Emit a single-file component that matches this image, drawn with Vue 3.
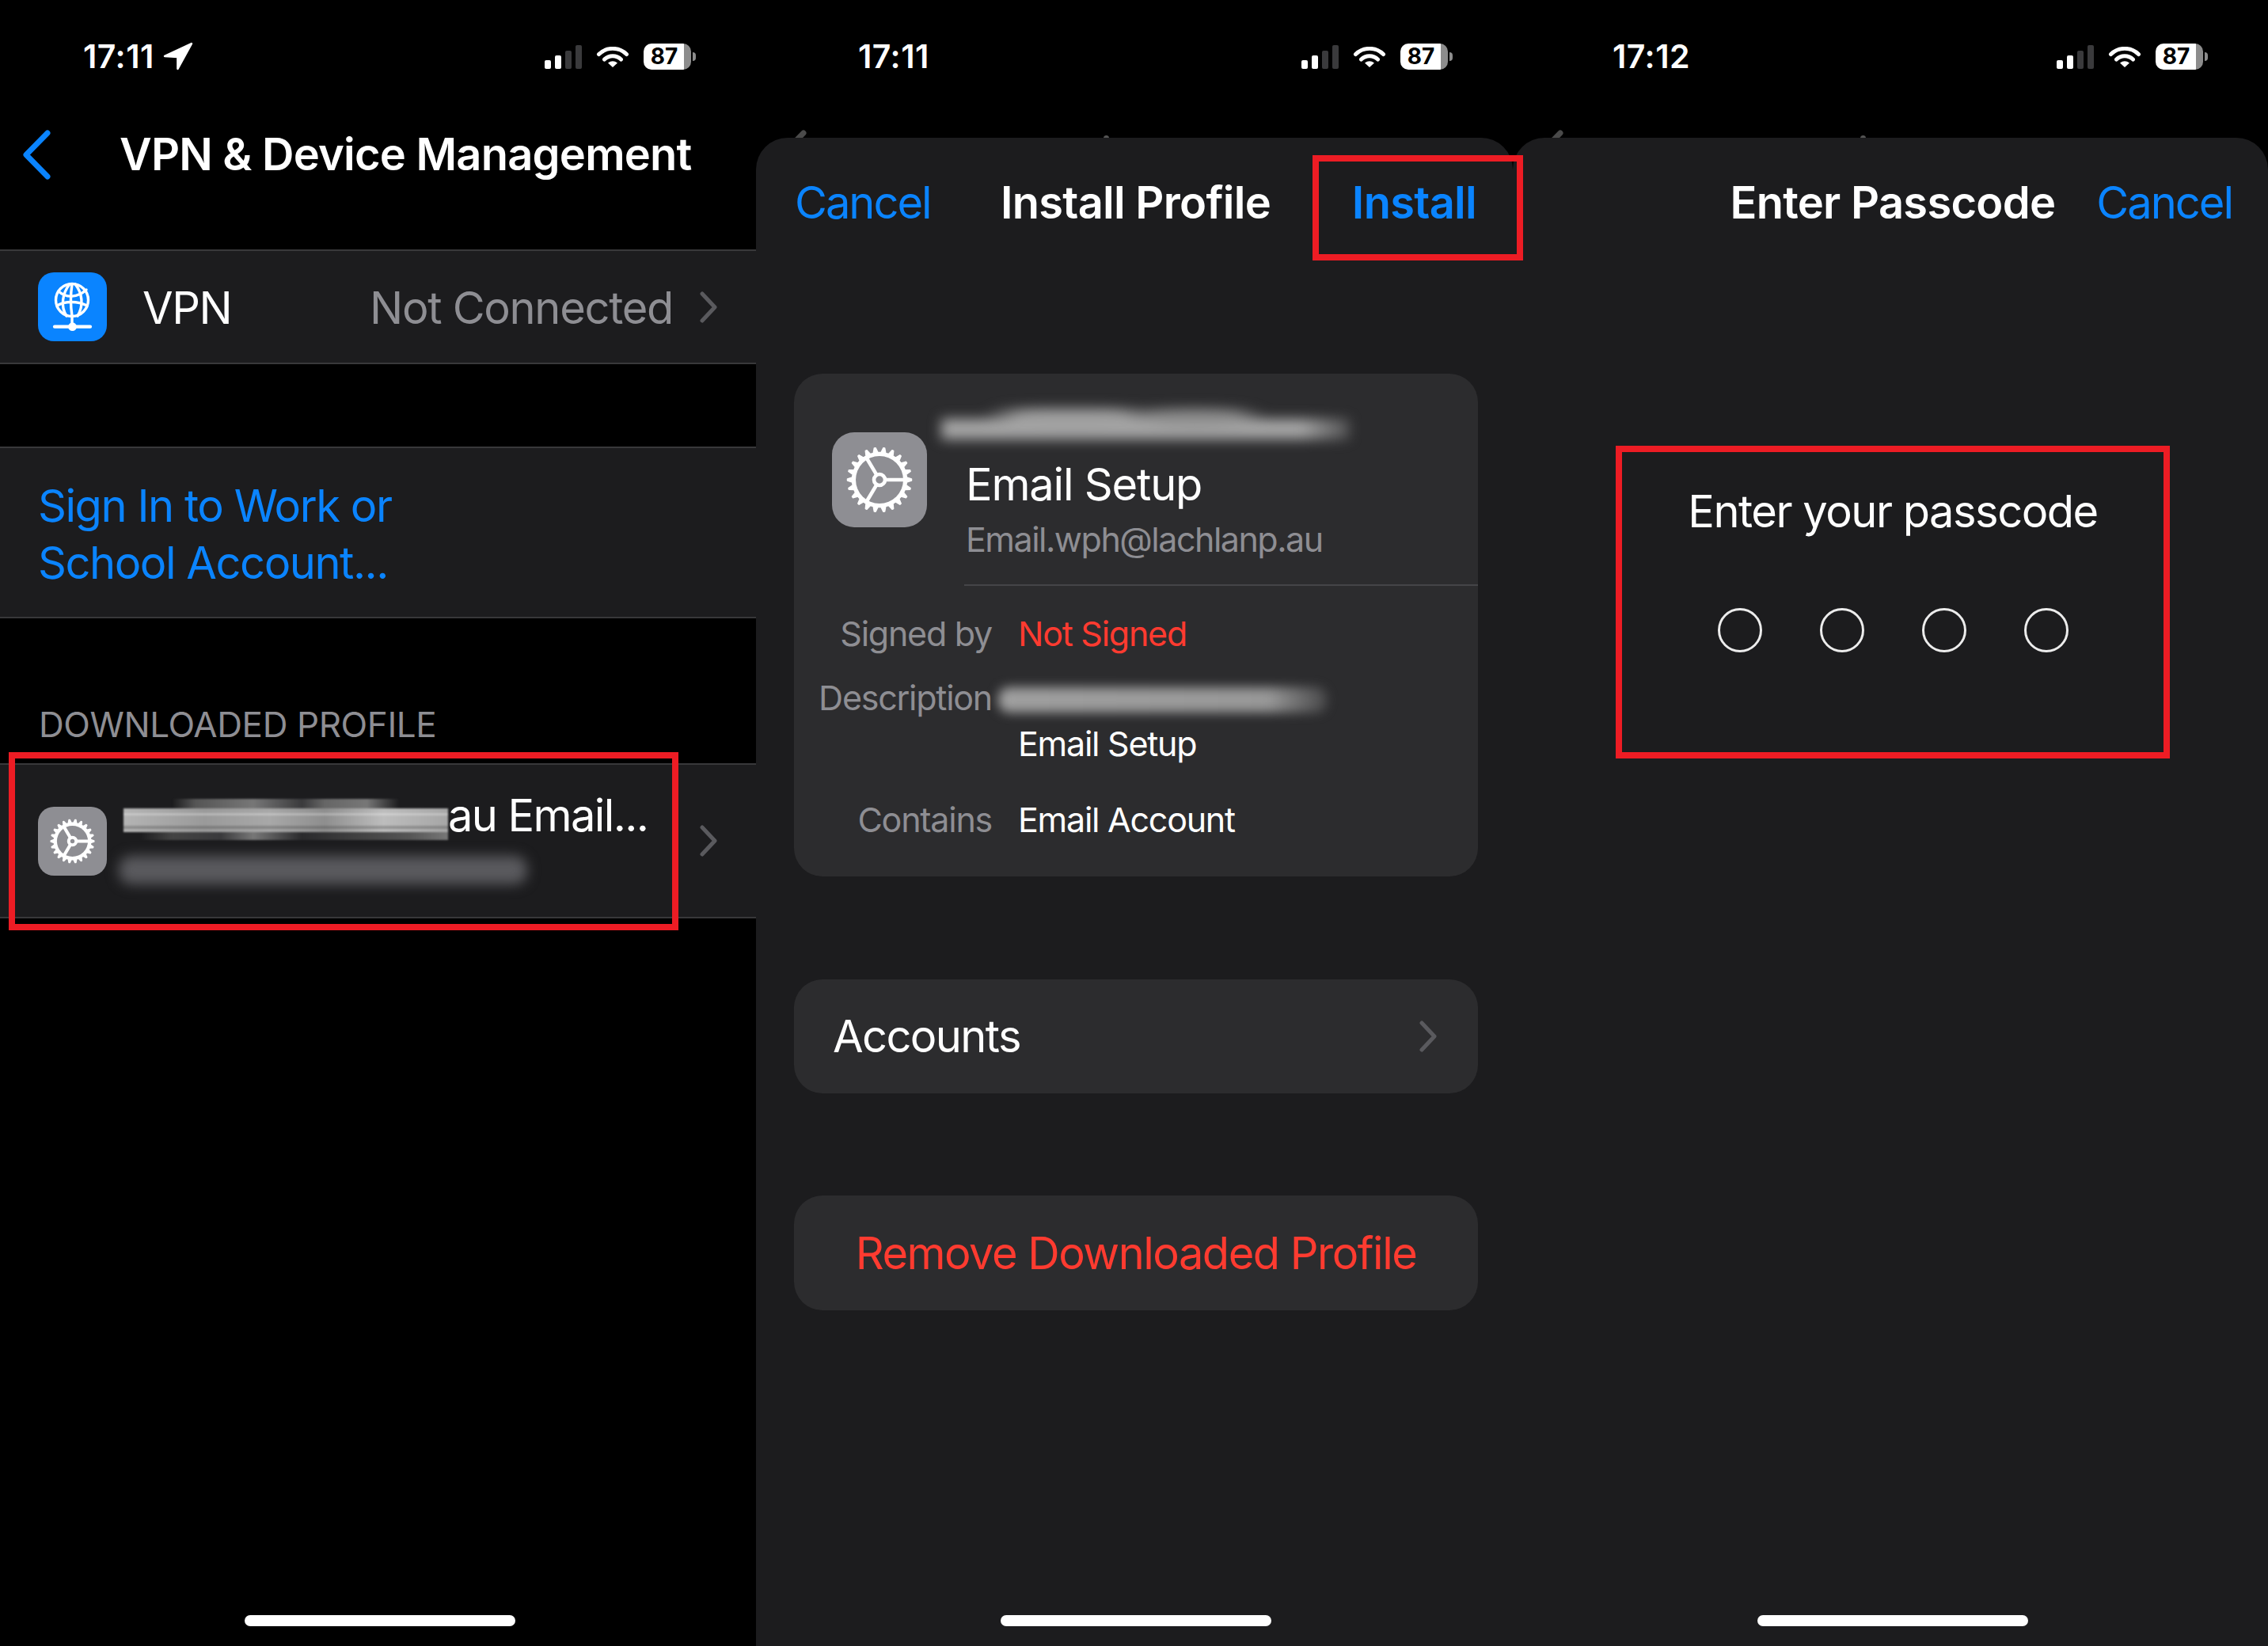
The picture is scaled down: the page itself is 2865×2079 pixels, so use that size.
<script setup>
const bars = [
  { h: 11, on: true },
  { h: 17, on: true },
  { h: 23, on: false },
  { h: 30, on: false },
]

function gear() {
  const teeth = 22
  const cx = 60
  const cy = 60
  const root = 34.5
  const tip = 40.5
  const pts = []
  for (let i = 0; i < teeth; i++) {
    const a = (i / teeth) * Math.PI * 2
    const s = (Math.PI * 2) / teeth
    const list = [
      [root, a - s * 0.3],
      [tip, a - s * 0.08],
      [tip, a + s * 0.08],
      [root, a + s * 0.3],
    ]
    for (const [r, t] of list) {
      pts.push(`${(cx + r * Math.cos(t)).toFixed(2)} ${(cy + r * Math.sin(t)).toFixed(2)}`)
    }
  }
  return 'M' + pts.join('L') + 'Z'
}
const gearPath = gear()
</script>

<template>
  <div class="screen">
    <!-- Left: settings list -->
    <section class="panel panel-a">
      <header class="status">
        <div class="clock">
          <span>17:11</span>
          <svg class="locate" viewBox="-2 -2 36 34"><path d="M32 0 L0 15 L15.5 16 L15.5 30 Z" fill="#fff" stroke="#fff" stroke-width="2.5" stroke-linejoin="round" /></svg>
        </div>
        <div class="indicators">
          <div class="signal"><i v-for="(b, n) in bars" :key="n" :class="{ on: b.on }" :style="{ height: b.h + 'px' }"></i></div>
          <svg class="wifi" viewBox="0 0 42 26"><path d="M3.5 9.5 A 25 25 0 0 1 38.5 9.5 M10.5 16 A 15 15 0 0 1 31.5 16" fill="none" stroke="#fff" stroke-width="5" stroke-linecap="round" /><path d="M21 26 L15 20.5 Q21 16 27 20.5 Z" fill="#fff" /></svg>
          <div class="battery"><span class="cell">87</span><i class="nub"></i></div>
        </div>
      </header>
      <nav class="list-nav">
        <svg class="back" viewBox="0 0 36 63"><path d="M32 4 L5 31.5 L32 59" fill="none" stroke="#0a84ff" stroke-width="7" stroke-linecap="round" stroke-linejoin="round" /></svg>
        <h1 class="list-title">VPN &amp; Device Management</h1>
      </nav>

      <div class="row row-vpn">
        <div class="app-icon vpn-icon">
          <svg viewBox="0 0 87 87">
            <g fill="none" stroke="#fff" stroke-width="3.4" stroke-linecap="round">
              <circle cx="43" cy="35" r="20.5" />
              <path d="M40 15 C31 26 28 43 36 55" />
              <path d="M47 15 C56 26 58 42 50 55" />
              <path d="M43 15 C41 28 41 42 43 55" />
              <path d="M26 24 C36 33 50 32 61 22" />
              <path d="M24 42 C34 36 50 36 62 42" />
              <path d="M43 56 V68" />
            </g>
            <path d="M21 68.7 H66" stroke="#fff" stroke-width="4.2" stroke-linecap="round" />
            <circle cx="43.5" cy="68.7" r="5.4" fill="#fff" />
          </svg>
        </div>
        <span class="row-label">VPN</span>
        <span class="row-value">Not Connected</span>
        <svg class="chev" viewBox="0 0 22 40"><path d="M3 3 L19 20 L3 37" fill="none" stroke="currentColor" stroke-width="5" stroke-linecap="round" stroke-linejoin="round" /></svg>
      </div>

      <div class="signin">
        <span>Sign In to Work or</span>
        <span>School Account...</span>
      </div>

      <h2 class="section-head">DOWNLOADED PROFILE</h2>
      <div class="row row-profile">
        <div class="app-icon gear-icon">
          <svg viewBox="0 0 120 120">
            <path :d="gearPath" fill="#fff" stroke="#fff" stroke-width="2" stroke-linejoin="round" />
            <circle cx="60" cy="60" r="29" fill="#8e8e93" />
            <g stroke="#fff" stroke-width="6" fill="none">
              <path d="M68 60 H91 M56 66.9 L44 87 M56 53.1 L44 33" />
              <circle cx="60" cy="60" r="7" />
            </g>
          </svg>
        </div>
        <span class="profile-name">au Email...</span>
        <svg class="chev" viewBox="0 0 22 40"><path d="M3 3 L19 20 L3 37" fill="none" stroke="currentColor" stroke-width="5" stroke-linecap="round" stroke-linejoin="round" /></svg>
        <div class="smear smear-name"></div>
        <div class="smear smear-sub"></div>
      </div>

      <div class="home"></div>
      <div class="mark mark-profile"></div>
    </section>

    <!-- Middle: install profile sheet -->
    <section class="panel panel-b">
      <header class="status status-plain">
        <div class="clock"><span>17:11</span></div>
        <div class="indicators">
          <div class="signal"><i v-for="(b, n) in bars" :key="n" :class="{ on: b.on }" :style="{ height: b.h + 'px' }"></i></div>
          <svg class="wifi" viewBox="0 0 42 26"><path d="M3.5 9.5 A 25 25 0 0 1 38.5 9.5 M10.5 16 A 15 15 0 0 1 31.5 16" fill="none" stroke="#fff" stroke-width="5" stroke-linecap="round" /><path d="M21 26 L15 20.5 Q21 16 27 20.5 Z" fill="#fff" /></svg>
          <div class="battery"><span class="cell">87</span><i class="nub"></i></div>
        </div>
      </header>
      <svg class="ghost-back" viewBox="0 0 36 63"><path d="M32 4 L5 31.5 L32 59" fill="none" stroke="#4a4a4a" stroke-width="7" stroke-linecap="round" /></svg>
      <i class="ghost-dot"></i>
      <div class="sheet">
        <nav class="sheet-nav install-nav">
          <span class="link cancel">Cancel</span>
          <h1 class="sheet-title">Install Profile</h1>
          <span class="link install">Install</span>
        </nav>

        <div class="card detail">
          <div class="detail-head">
            <div class="app-icon gear-large">
              <svg viewBox="0 0 120 120">
                <path :d="gearPath" fill="#fff" stroke="#fff" stroke-width="1.5" stroke-linejoin="round" />
                <circle cx="60" cy="60" r="30" fill="#8e8e93" />
                <g stroke="#fff" stroke-width="4.6" fill="none">
                  <path d="M68 60 H91 M56 66.9 L44 87 M56 53.1 L44 33" />
                  <circle cx="60" cy="60" r="7" />
                </g>
              </svg>
            </div>
            <div class="detail-text">
              <div class="detail-name">Email Setup</div>
              <div class="detail-mail">Email.wph@lachlanp.au</div>
            </div>
          </div>
          <div class="kv kv-signed">
            <span class="key">Signed by</span>
            <span class="val danger">Not Signed</span>
          </div>
          <div class="kv kv-desc">
            <span class="key">Description</span>
            <span class="val val-desc">Email Setup</span>
          </div>
          <div class="kv kv-contains">
            <span class="key">Contains</span>
            <span class="val">Email Account</span>
          </div>
          <div class="smear smear-org"></div>
          <div class="smear smear-desc"></div>
        </div>

        <div class="card accounts">
          <span>Accounts</span>
          <svg class="chev" viewBox="0 0 22 40"><path d="M3 3 L19 20 L3 37" fill="none" stroke="currentColor" stroke-width="5" stroke-linecap="round" stroke-linejoin="round" /></svg>
        </div>
        <div class="card remove">Remove Downloaded Profile</div>

        <div class="home"></div>
      </div>
      <div class="mark mark-install"></div>
    </section>

    <!-- Right: passcode sheet -->
    <section class="panel panel-c">
      <header class="status status-plain">
        <div class="clock"><span>17:12</span></div>
        <div class="indicators">
          <div class="signal"><i v-for="(b, n) in bars" :key="n" :class="{ on: b.on }" :style="{ height: b.h + 'px' }"></i></div>
          <svg class="wifi" viewBox="0 0 42 26"><path d="M3.5 9.5 A 25 25 0 0 1 38.5 9.5 M10.5 16 A 15 15 0 0 1 31.5 16" fill="none" stroke="#fff" stroke-width="5" stroke-linecap="round" /><path d="M21 26 L15 20.5 Q21 16 27 20.5 Z" fill="#fff" /></svg>
          <div class="battery"><span class="cell">87</span><i class="nub"></i></div>
        </div>
      </header>
      <svg class="ghost-back" viewBox="0 0 36 63"><path d="M32 4 L5 31.5 L32 59" fill="none" stroke="#4a4a4a" stroke-width="7" stroke-linecap="round" /></svg>
      <i class="ghost-dot"></i>
      <div class="sheet">
        <nav class="sheet-nav pass-nav">
          <h1 class="sheet-title">Enter Passcode</h1>
          <span class="link cancel">Cancel</span>
        </nav>
        <div class="pass">
          <p class="pass-text">Enter your passcode</p>
          <div class="dots"><i v-for="n in 4" :key="n"></i></div>
        </div>
        <div class="home"></div>
      </div>
      <div class="mark mark-pass"></div>
    </section>
  </div>
</template>

<style>
html, body { margin: 0; background: #000; }
</style>

<style scoped>
.screen {
  display: flex;
  width: 2865px;
  height: 2079px;
  overflow: hidden;
  background: #000;
  color: #fff;
  font-family: Inter, "Liberation Sans", sans-serif;
}
.panel { position: relative; display: flex; flex-direction: column; height: 2079px; flex: none; }
.panel-a { width: 955px; }
.panel-b { width: 956px; }
.panel-c { width: 954px; }

/* status bar */
.status { display: flex; flex: none; align-items: center; justify-content: space-between; height: 142px; padding: 0 76px 0 105px; box-sizing: border-box; }
.status-plain { padding-left: 129px; }
.panel-c .status-plain { padding-left: 126px; }
.clock { display: flex; align-items: center; gap: 11px; font-size: 41px; font-weight: 600; letter-spacing: 0.5px; line-height: 1; }
.locate { width: 38px; height: 36px; }
.indicators { display: flex; align-items: center; }
.signal { display: flex; align-items: flex-end; gap: 5px; height: 30px; margin-top: 1px; }
.signal i { width: 8px; border-radius: 2px; background: #3a3a3c; }
.signal i.on { background: #fff; }
.wifi { width: 42px; height: 26px; margin: 2px 18px 0 18px; }
.battery { display: flex; align-items: center; }
.cell { width: 60px; height: 33px; border-radius: 10px; background: linear-gradient(90deg, #fff 0 51px, #8c8c8c 51px); color: #000; font-size: 28px; font-weight: 700; line-height: 33px; text-align: center; box-sizing: border-box; padding-right: 8px; }
.nub { width: 4px; height: 11px; margin-left: 2px; border-radius: 0 5px 5px 0; background: #8c8c8c; }

/* list screen */
.list-nav { display: flex; flex: none; align-items: center; height: 106px; margin-bottom: 67px; padding-left: 28px; }
.back { width: 36px; height: 63px; flex: none; }
.list-title { margin: 0 0 0 87px; font-size: 56px; font-weight: 600; letter-spacing: -0.78px; line-height: 68px; white-space: nowrap; }
.row { position: relative; display: flex; flex: none; align-items: center; box-sizing: border-box; padding: 0 49px 0 48px; background: #1c1c1e; border-top: 2px solid #38383a; border-bottom: 2px solid #38383a; font-size: 56px; letter-spacing: -1.45px; }
.row-vpn { height: 145px; }
.row-profile { height: 196px; }
.app-icon { flex: none; display: flex; align-items: center; justify-content: center; width: 87px; height: 87px; border-radius: 20px; }
.app-icon svg { display: block; width: 100%; height: 100%; }
.vpn-icon { background: #0a84ff; }
.gear-icon { background: #8e8e93; }
.gear-icon svg { width: 81px; height: 81px; }
.row-label { margin: 2px 0 0 45px; }
.row-value { margin: 2px 0 0 auto; color: #8e8e93; letter-spacing: -1.3px; }
.chev { flex: none; width: 22px; height: 40px; color: #5a5a5e; }
.row-value + .chev { margin-left: 34px; }
.signin { display: flex; flex: none; flex-direction: column; justify-content: center; box-sizing: border-box; height: 217px; margin-top: 104px; padding: 4px 48px 0; background: #1c1c1e; border-top: 2px solid #38383a; border-bottom: 2px solid #38383a; color: #0a84ff; font-size: 56px; letter-spacing: -1.45px; line-height: 72px; }
.section-head { flex: none; margin: 107px 0 22px 49px; color: #8e8e93; font-size: 44px; font-weight: 400; letter-spacing: -0.4px; line-height: 54px; white-space: nowrap; }
.profile-name { align-self: flex-start; margin: 30px auto 0 431px; letter-spacing: -1.6px; line-height: 68px; white-space: nowrap; }

/* redactions */
.smear { position: absolute; pointer-events: none; }
.smear-name { left: 156px; top: 43px; width: 410px; height: 52px; background:
  linear-gradient(180deg, transparent 0 6px, rgba(255, 255, 255, 0.28) 6px 9px, transparent 9px 22px, rgba(60, 60, 60, 0.3) 22px 26px, transparent 26px 36px, rgba(255, 255, 255, 0.22) 36px 39px, transparent 39px) 0 12px / 100% 30px no-repeat,
  linear-gradient(90deg, #b4b4b4 0, #9a9a9a 25%, #a8a8a8 45%, #8e8e8e 62%, #bdbdbd 80%, #a6a6a6 100%) 0 12px / 100% 30px no-repeat,
  linear-gradient(90deg, transparent 15%, #555 22%, #777 40%, #3a3a3c 55%, #666 62%, #777 75%, transparent 85%) 0 0 / 100% 12px no-repeat,
  linear-gradient(90deg, transparent 5%, #444 15%, #3a3a3c 30%, #777 40%, #2a2a2c 55%, #555 88%, #777 100%) 0 42px / 100% 10px no-repeat;
  filter: blur(1px); }
.smear-sub { left: 150px; top: 115px; width: 516px; height: 36px; border-radius: 16px; background: #5a5a5e; filter: blur(8px); }
.smear-org { left: 186px; top: 44px; width: 516px; height: 46px; background:
  radial-gradient(ellipse 22% 40% at 32% 22%, #a0a0a0 0 60%, transparent 100%),
  radial-gradient(ellipse 18% 30% at 62% 22%, #8c8c8c 0 60%, transparent 100%),
  linear-gradient(90deg, #a6a6a6 0 88%, rgba(166, 166, 166, 0.3) 100%) 0 13px / 100% 26px no-repeat;
  filter: blur(8px); }
.smear-desc { left: 258px; top: 396px; width: 416px; height: 32px; border-radius: 14px; background: linear-gradient(90deg, #a0a0a0 0, #989898 82%, rgba(152, 152, 152, 0.25) 100%); filter: blur(7px); }

/* sheets */
.sheet { position: relative; z-index: 1; display: flex; flex: 1; flex-direction: column; margin-top: 32px; border-radius: 40px 40px 0 0; background: #1c1c1e; }
.ghost-back { position: absolute; left: 28px; top: 164px; width: 36px; height: 63px; }
.ghost-dot { position: absolute; left: 439px; top: 171px; width: 7px; height: 7px; border-radius: 50%; background: #555; }
.sheet-nav { flex: none; height: 164px; box-sizing: border-box; align-items: center; font-size: 56px; }
.install-nav { display: grid; grid-template-columns: 1fr auto 1fr; padding: 0 46px 0 49px; }
.install { justify-self: end; font-weight: 600; letter-spacing: -0.7px; }
.pass-nav { display: flex; justify-content: flex-end; gap: 52px; padding-right: 45px; }
.sheet-title { margin: 0; font-size: 56px; font-weight: 600; letter-spacing: -0.72px; line-height: 68px; white-space: nowrap; }
.link { color: #0a84ff; line-height: 68px; }
.cancel { letter-spacing: -2px; }

.card { flex: none; box-sizing: border-box; margin: 0 44px 0 48px; border-radius: 36px; background: #2c2c2e; }
.detail { position: relative; height: 635px; margin-top: 134px; overflow: hidden; }
.detail-head { display: flex; }
.gear-large { width: 120px; height: 120px; margin: 74px 47px 0 48px; border-radius: 28px; background: #8e8e93; }
.detail-text { flex: 1; box-sizing: border-box; height: 268px; padding: 106px 0 0 2px; border-bottom: 2px solid #454548; }
.detail-name { font-size: 56px; letter-spacing: -1.2px; line-height: 68px; }
.detail-mail { margin-top: 9px; color: #8e8e93; font-size: 43px; letter-spacing: -1.5px; line-height: 52px; }
.kv { display: grid; grid-template-columns: 250px 1fr; column-gap: 33px; font-size: 43px; letter-spacing: -1.25px; line-height: 52px; }
.kv-signed { margin-top: 34px; }
.kv-desc { margin-top: 29px; }
.kv-contains { margin-top: 44px; }
.key { color: #8e8e93; text-align: right; white-space: nowrap; }
.val { white-space: nowrap; }
.val-desc { padding-top: 58px; }
.danger { color: #ff3b30; }

.accounts { display: flex; align-items: center; justify-content: space-between; height: 144px; margin-top: 130px; padding: 0 52px 0 49px; font-size: 56px; letter-spacing: -1.6px; }
.remove { display: flex; align-items: center; justify-content: center; height: 145px; margin-top: 129px; color: #ff3b30; font-size: 56px; letter-spacing: -1.5px; }

.pass { display: flex; flex-direction: column; align-items: center; margin-top: 274px; padding-left: 6px; }
.pass-text { margin: 0; font-size: 56px; letter-spacing: -1.5px; line-height: 68px; }
.dots { display: flex; gap: 73px; margin-top: 88px; }
.dots i { width: 56px; height: 56px; box-sizing: border-box; border: 3px solid #ececec; border-radius: 50%; }

.home { flex: none; width: 342px; height: 14px; margin: auto 0 25px 309px; border-radius: 7px; background: #fff; }

/* annotation frames */
.mark { position: absolute; z-index: 5; box-sizing: border-box; border: 8px solid #ed1c24; pointer-events: none; }
.mark-profile { left: 11px; top: 950px; width: 846px; height: 225px; }
.mark-install { left: 703px; top: 196px; width: 266px; height: 133px; }
.mark-pass { left: 130px; top: 563px; width: 700px; height: 395px; }
</style>
